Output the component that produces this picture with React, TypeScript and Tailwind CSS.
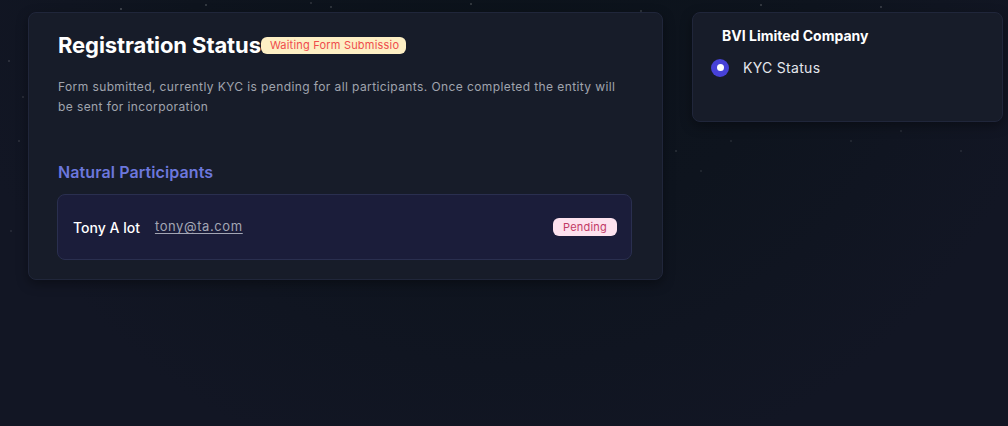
import React from "react";

const stars: [number, number, number][] = [
  [120, 8, 0.5], [205, 4, 0.4], [260, 22, 0.3], [330, 6, 0.35], [470, 3, 0.4], [560, 18, 0.3],
  [640, 10, 0.35], [760, 4, 0.4], [880, 6, 0.4], [940, 14, 0.3], [990, 28, 0.35], [8, 60, 0.3],
  [18, 140, 0.25], [10, 230, 0.2], [675, 150, 0.25], [700, 170, 0.2], [770, 120, 0.25],
  [900, 130, 0.2], [960, 150, 0.2], [1000, 100, 0.3], [985, 60, 0.35], [310, 2, 0.3], [50, 20, 0.3],
  [22, 96, 0.25], [850, 140, 0.2], [730, 140, 0.2],
];

export default function App() {
  return (
    <div
      className="relative w-[1008px] h-[426px] overflow-hidden bg-[#121624]"
      style={{ fontFamily: "Inter, 'Liberation Sans', sans-serif" }}
    >
      <div className="absolute inset-0 bg-[radial-gradient(ellipse_at_50%_-20%,#0b121a_0%,#0e141e_45%,#121624_80%)]" />
      {stars.map(([x, y, o], i) => (
        <div
          key={i}
          className="absolute w-[2px] h-[2px] rounded-full bg-white"
          style={{ left: x, top: y, opacity: o * 0.5 }}
        />
      ))}
      <div className="relative flex items-start gap-[29px] pl-[28px] pt-[12px]">
        <div className="w-[635px] h-[268px] rounded-lg bg-[#171c29] border border-[#20263a] shadow-[0_4px_12px_rgba(0,0,0,0.35)] pl-[29px] pr-[30px] pt-[18px]">
          <div className="flex items-center">
            <h1 className="text-[22px] leading-[28px] font-bold text-white tracking-[-0.1px]">Registration Status</h1>
            <span className="mt-[1px] h-[17px] whitespace-nowrap rounded-[6px] bg-[#fdefc4] pl-[9px] pr-[7px] text-[11px] leading-[17px] tracking-[0.2px] text-[#ef4c4c]">
              Waiting Form Submissio
            </span>
          </div>
          <p className="mt-[18px] text-[12px] leading-[20px] tracking-[0.4px] text-[#a0a4ae] w-[570px]">
            Form submitted, currently KYC is pending for all participants. Once completed the entity will be sent for incorporation
          </p>
          <h2 className="mt-[45px] text-[16px] leading-[20px] font-semibold tracking-[0.1px] text-[#6c77dc]">Natural Participants</h2>
          <div className="mt-[12px] -ml-[1px] h-[66px] rounded-lg border border-[#2a2f4f] bg-[#1b1d3a] flex items-center pl-[15px] pr-[14px]">
            <span className="text-[14px] font-medium text-white">Tony A lot</span>
            <span className="ml-[15px] text-[13px] tracking-[0.6px] text-[#a3a6b4] underline underline-offset-2">tony@ta.com</span>
            <span className="ml-auto w-[64px] h-[18px] rounded-[6px] bg-[#fde2ee] text-center text-[11px] leading-[18px] tracking-[0.2px] text-[#c23a66]">
              Pending
            </span>
          </div>
        </div>
        <div className="w-[311px] h-[110px] rounded-lg bg-[#171c29] border border-[#20263a] shadow-[0_4px_12px_rgba(0,0,0,0.35)] pt-[14px]">
          <div className="pl-[29px] text-[14px] leading-[18px] font-bold text-white">BVI Limited Company</div>
          <div className="mt-[12px] flex items-center pl-[18px]">
            <span className="w-[18px] h-[18px] rounded-full bg-[#4741d8] flex items-center justify-center">
              <span className="w-[7px] h-[7px] rounded-full bg-white" />
            </span>
            <span className="ml-[14px] text-[14px] tracking-[0.3px] text-[#e4e6ec]">KYC Status</span>
          </div>
        </div>
      </div>
    </div>
  );
}
